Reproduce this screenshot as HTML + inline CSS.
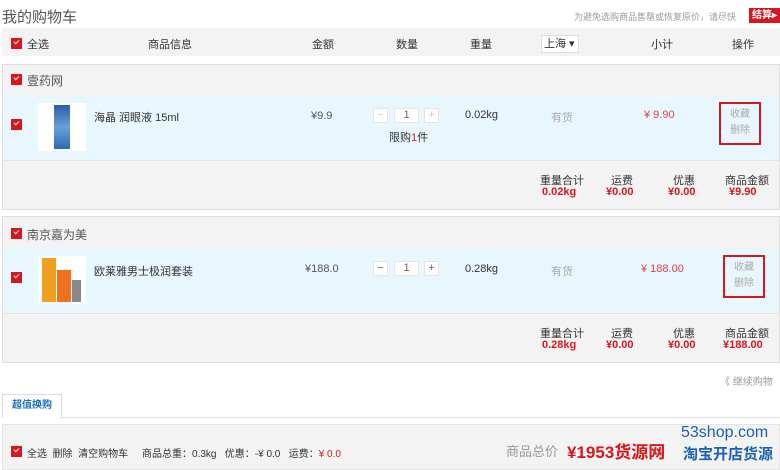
<!DOCTYPE html><html><head><meta charset="utf-8"><style>
*{margin:0;padding:0;box-sizing:border-box}
body{width:780px;height:470px;overflow:hidden;background:#fff;font-family:"Liberation Sans","Noto Sans CJK SC",sans-serif;font-size:11px;color:#333;position:relative}
.a{position:absolute;white-space:nowrap}
.cb{position:absolute;width:11px;height:11px;background:#d9161c;}
.cb:after{content:"";position:absolute;left:3px;top:2px;width:4px;height:2px;border-left:1.5px solid #fff;border-bottom:1.5px solid #fff;transform:rotate(-45deg)}
.gray{background:#f3f3f3}
.red{color:#d9161c}
.b{font-weight:bold}
.qb{position:absolute;width:15px;height:15px;background:#fff;border:1px solid #e5e5e5;text-align:center;line-height:13px;font-size:11px;color:#666}
.op{position:absolute;width:42px;height:43px;border:2px solid #d9161c;color:#aaa;text-align:center;font-size:10px;line-height:16px;padding-top:3px}
</style></head><body>
<div class="a" style="left:2px;top:6px;font-size:15px;color:#555">我的购物车</div>
<div class="a" style="left:574px;top:10px;font-size:9px;color:#999">为避免选购商品售罄或恢复原价，请尽快</div>
<div class="a" style="left:749px;top:8px;width:31px;height:15px;background:#d9161c;color:#fff;font-size:10px;font-weight:bold;line-height:15px;padding-left:3px">结算▸</div>
<div class="a gray" style="left:2px;top:28px;width:778px;height:28px"></div>
<div class="cb" style="left:11px;top:38px"></div>
<div class="a" style="left:27px;top:36px">全选</div>
<div class="a" style="left:148px;top:36px">商品信息</div>
<div class="a" style="left:312px;top:36px">金额</div>
<div class="a" style="left:396px;top:36px">数量</div>
<div class="a" style="left:470px;top:36px">重量</div>
<div class="a" style="left:541px;top:35px;width:38px;height:18px;background:#fff;border:1px solid #ddd;line-height:16px;padding-left:2px">上海 ▾</div>
<div class="a" style="left:651px;top:36px">小计</div>
<div class="a" style="left:732px;top:36px">操作</div>

<!-- shop 1 -->
<div class="a" style="left:2px;top:64px;width:778px;height:146px;border:1px solid #ddd"></div>
<div class="a gray" style="left:3px;top:65px;width:776px;height:30px"></div>
<div class="cb" style="left:11px;top:74px"></div>
<div class="a" style="left:27px;top:72px;font-size:12px;color:#555">壹药网</div>
<div class="a" style="left:3px;top:95px;width:776px;height:65px;background:#e8f6fd"></div>
<div class="cb" style="left:11px;top:119px"></div>
<div class="a" style="left:38px;top:103px;width:48px;height:48px;background:#fff"><div style="margin:2px auto;width:16px;height:44px;background:linear-gradient(#2a5ca8,#6aa0d8 50%,#2b6bb5)"></div></div>
<div class="a" style="left:94px;top:109px">海晶 润眼液 15ml</div>
<div class="a" style="left:311px;top:110px;color:#555">¥9.9</div>
<div class="qb" style="left:373px;top:108px;color:#ccc">−</div>
<div class="qb" style="left:394px;top:108px;width:25px">1</div>
<div class="qb" style="left:424px;top:108px;color:#ccc">+</div>
<div class="a" style="left:389px;top:129px">限购<span class="red">1</span>件</div>
<div class="a" style="left:465px;top:109px">0.02kg</div>
<div class="a" style="left:551px;top:109px;color:#aaa">有货</div>
<div class="a red" style="left:644px;top:109px;color:#e04040">¥ 9.90</div>
<div class="op" style="left:719px;top:102px">收藏<br>删除</div>
<div class="a gray" style="left:3px;top:160px;width:776px;height:49px;border-top:1px solid #e3e3e3"></div>
<div class="a" style="left:540px;top:172px">重量合计</div><div class="a red b" style="left:542px;top:186px">0.02kg</div>
<div class="a" style="left:611px;top:172px">运费</div><div class="a red b" style="left:606px;top:186px">¥0.00</div>
<div class="a" style="left:673px;top:172px">优惠</div><div class="a red b" style="left:668px;top:186px">¥0.00</div>
<div class="a" style="left:725px;top:172px">商品金额</div><div class="a red b" style="left:729px;top:186px">¥9.90</div>

<!-- shop 2 -->
<div class="a" style="left:2px;top:216px;width:778px;height:147px;border:1px solid #ddd"></div>
<div class="a gray" style="left:3px;top:217px;width:776px;height:31px"></div>
<div class="cb" style="left:11px;top:228px"></div>
<div class="a" style="left:27px;top:226px;font-size:12px;color:#555">南京嘉为美</div>
<div class="a" style="left:3px;top:248px;width:776px;height:65px;background:#e8f6fd"></div>
<div class="cb" style="left:11px;top:272px"></div>
<div class="a" style="left:38px;top:256px;width:48px;height:48px;background:#fff"><div style="position:absolute;left:4px;top:2px;width:14px;height:44px;background:#f0a020"></div><div style="position:absolute;left:19px;top:14px;width:14px;height:32px;background:#f07020"></div><div style="position:absolute;left:34px;top:24px;width:9px;height:22px;background:#888"></div></div>
<div class="a" style="left:94px;top:263px">欧莱雅男士极润套装</div>
<div class="a" style="left:305px;top:263px;color:#555">¥188.0</div>
<div class="qb" style="left:373px;top:261px">−</div>
<div class="qb" style="left:394px;top:261px;width:25px">1</div>
<div class="qb" style="left:424px;top:261px">+</div>
<div class="a" style="left:465px;top:263px">0.28kg</div>
<div class="a" style="left:551px;top:263px;color:#aaa">有货</div>
<div class="a" style="left:641px;top:263px;color:#e04040">¥ 188.00</div>
<div class="op" style="left:723px;top:255px">收藏<br>删除</div>
<div class="a gray" style="left:3px;top:313px;width:776px;height:49px;border-top:1px solid #e3e3e3"></div>
<div class="a" style="left:540px;top:325px">重量合计</div><div class="a red b" style="left:542px;top:339px">0.28kg</div>
<div class="a" style="left:611px;top:325px">运费</div><div class="a red b" style="left:606px;top:339px">¥0.00</div>
<div class="a" style="left:673px;top:325px">优惠</div><div class="a red b" style="left:668px;top:339px">¥0.00</div>
<div class="a" style="left:725px;top:325px">商品金额</div><div class="a red b" style="left:723px;top:339px">¥188.00</div>

<div class="a" style="left:720px;top:373px;font-size:10px;color:#999">《 继续购物</div>
<div class="a" style="left:2px;top:417px;width:778px;border-top:1px solid #ddd"></div>
<div class="a" style="left:2px;top:394px;width:60px;height:24px;background:#fff;border:1px solid #ddd;border-bottom:none;color:#1a6fc0;font-weight:bold;font-size:10px;line-height:22px;text-align:center">超值换购</div>
<div class="a gray" style="left:2px;top:424px;width:778px;height:46px;border:1px solid #e3e3e3"></div>
<div class="cb" style="left:11px;top:446px"></div>
<div class="a" style="left:27px;top:445px;font-size:10px">全选 &nbsp;删除 &nbsp;清空购物车 &nbsp;&nbsp;&nbsp;&nbsp;商品总重：0.3kg &nbsp;&nbsp;优惠：-¥ 0.0 &nbsp;&nbsp;运费：<span class="red">¥ 0.0</span></div>
<div class="a" style="left:506px;top:441px;font-size:13px;color:#999">商品总价</div>
<div class="a red b" style="left:567px;top:438px;font-size:17px">¥1953货源网</div>
<div class="a" style="left:681px;top:424px;font-size:16px;color:#1a5fb4">53shop.com</div>
<div class="a b" style="left:683px;top:443px;font-size:15px;color:#1a5fb4">淘宝开店货源</div>
</body></html>
